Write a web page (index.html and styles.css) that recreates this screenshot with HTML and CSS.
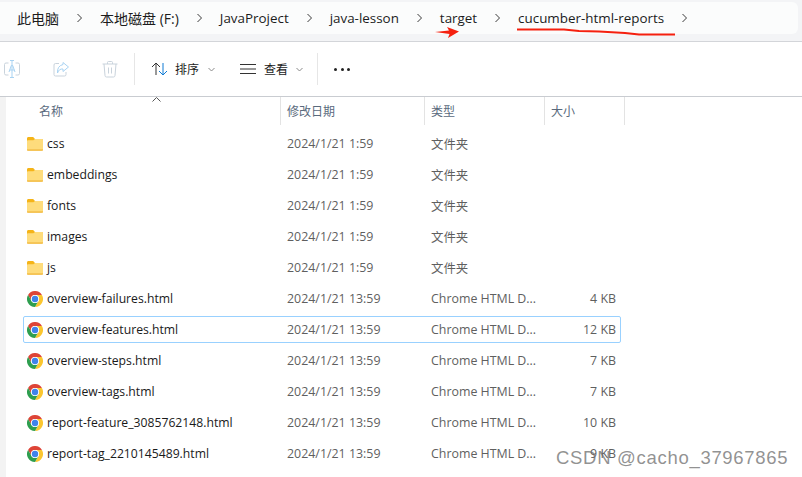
FILE: index.html
```html
<!DOCTYPE html>
<html lang="zh-CN">
<head>
    <meta charset="UTF-8">
    <meta name="viewport" content="width=device-width, initial-scale=1.0">
    <title>cucumber-html-reports</title>
    <link rel="stylesheet" href="styles.css">
</head>
<body>
    <svg class="sprites" width="0" height="0">
        <symbol id="folder" viewBox="0 0 16 16">
            <path d="M0 2.500C0 1.700.6 1 1.400 1h4.200c.4 0 .7.2 1 .4L8 3h6.600c.8 0 1.400.6 1.400 1.400V13c0 .9-.7 1.600-1.600 1.600H1.600C.7 14.600 0 13.900 0 13z" fill="#f5b418"/>
            <path d="M0 5.200c0-.6.5-1 1-1h5.400L8 3h6.600c.8 0 1.400.6 1.400 1.400V13c0 .9-.7 1.400-1.600 1.400H1.600C.7 14.400 0 13.900 0 13z" fill="#fedc7c"/>
            <rect y="13.600" width="16" height="1" rx=".5" fill="#eeb033"/>
        </symbol>
        <symbol id="chrome" viewBox="0 0 16 16">
            <path d="M1.070 4A8 8 0 0 1 14.930 4H8A4 4 0 0 0 4.540 10Z" fill="#de4437"/>
            <path d="M14.930 4A8 8 0 0 1 8 16L11.460 10A4 4 0 0 0 8 4Z" fill="#fbc62f"/>
            <path d="M8 16A8 8 0 0 1 1.070 4L4.540 10A4 4 0 0 0 11.460 10Z" fill="#2e9e4f"/>
            <circle cx="8" cy="8" r="4" fill="#fff"/>
            <circle cx="8" cy="8" r="3.200" fill="#3f83ea"/>
        </symbol>
        <symbol id="chevron" viewBox="0 0 7 10">
            <path d="M1.500 1 5.500 5 1.500 9"/>
        </symbol>
    </svg>

    <div class="addressbar">
        <div class="crumbs">
            <span class="crumb cn">此电脑</span>
            <svg class="sep"><use href="#chevron"/></svg>
            <span class="crumb cn">本地磁盘 (F:)</span>
            <svg class="sep"><use href="#chevron"/></svg>
            <span class="crumb">JavaProject</span>
            <svg class="sep"><use href="#chevron"/></svg>
            <span class="crumb">java-lesson</span>
            <svg class="sep"><use href="#chevron"/></svg>
            <span class="crumb">target
                <svg class="mark-arrow" width="25" height="12" viewBox="0 0 25 12"><path d="M0 5 14 3.500 12 0 24 4.500 13 11 14.500 7z"/></svg>
            </span>
            <svg class="sep"><use href="#chevron"/></svg>
            <span class="crumb">cucumber-html-reports
                <svg class="mark-line" width="160" height="9" viewBox="0 0 160 9"><path d="M0 1.500 47 1.500 62 3 82 3.500 108 5 122 6.500 158 6.500"/></svg>
            </span>
            <svg class="sep"><use href="#chevron"/></svg>
        </div>
    </div>

    <div class="toolbar">
        <div class="tool-group">
            <svg class="tool-icon" width="16" height="18" viewBox="0 0 16 18"><path d="M4.500 3H2Q.5 3 .5 4.500v9Q.5 15 2 15h2.500M11.500 3H14q1.500 0 1.500 1.500v9Q15.500 15 14 15h-2.500"/><path class="accent" d="M8 1v16M6 .5h4M6 17.500h4M5 12 7.300 5.500h1.400L11 12M5.800 10h4.400"/></svg>
            <svg class="tool-icon" width="16" height="18" viewBox="0 0 16 18"><path d="M6 3.500H2.500Q1 3.500 1 5v9.500Q1 16 2.500 16h9q1.500 0 1.500-1.500V12"/><path class="accent" d="M10 2.500l5.500 4.500-5.500 4.500V9Q6 8.500 4.500 13q-.5-7 5.500-8.500z"/></svg>
            <svg class="tool-icon" width="16" height="18" viewBox="0 0 16 18"><path d="M.5 4h15M5.500 4V2.500Q5.500 1.500 6.500 1.500h3q1 0 1 1V4M2 4l1 11.500Q3.100 17 4.500 17h7q1.400 0 1.500-1.500L14 4M6.500 7.500v6M9.500 7.500v6"/></svg>
        </div>
        <div class="tool-divider"></div>
        <div class="tool-button sort">
            <svg width="17" height="14" viewBox="0 0 17 14"><path class="up" d="M5 13V1M1 5l4-4 4 4"/><path class="down" d="M12 1v12M8 9l4 4 4-4"/></svg>
            <span>排序</span>
            <svg class="caret" width="7" height="5" viewBox="0 0 7 5"><path d="M.5 1 3.500 4 6.500 1"/></svg>
        </div>
        <div class="tool-button view">
            <svg width="16" height="10" viewBox="0 0 16 10"><path d="M0 .5h16M0 5h16M0 9.500h16"/></svg>
            <span>查看</span>
            <svg class="caret" width="7" height="5" viewBox="0 0 7 5"><path d="M.5 1 3.500 4 6.500 1"/></svg>
        </div>
        <div class="tool-divider"></div>
        <div class="more"><i></i><i></i><i></i></div>
    </div>

    <div class="content">
        <div class="file-list">
            <div class="list-head">
                <div class="col-name">名称
                    <svg class="sort-arrow" width="9" height="5" viewBox="0 0 9 5"><path d="M.5 4.500 4.500 .5 8.500 4.500"/></svg>
                </div>
                <div class="col-date">修改日期</div>
                <div class="col-type">类型</div>
                <div class="col-size">大小</div>
            </div>

            <div class="rows">
                <div class="row"><div class="col-name"><svg class="file-icon"><use href="#folder"/></svg>css</div><div class="col-date">2024/1/21 1:59</div><div class="col-type">文件夹</div><div class="col-size"></div></div>
                <div class="row"><div class="col-name"><svg class="file-icon"><use href="#folder"/></svg>embeddings</div><div class="col-date">2024/1/21 1:59</div><div class="col-type">文件夹</div><div class="col-size"></div></div>
                <div class="row"><div class="col-name"><svg class="file-icon"><use href="#folder"/></svg>fonts</div><div class="col-date">2024/1/21 1:59</div><div class="col-type">文件夹</div><div class="col-size"></div></div>
                <div class="row"><div class="col-name"><svg class="file-icon"><use href="#folder"/></svg>images</div><div class="col-date">2024/1/21 1:59</div><div class="col-type">文件夹</div><div class="col-size"></div></div>
                <div class="row"><div class="col-name"><svg class="file-icon"><use href="#folder"/></svg>js</div><div class="col-date">2024/1/21 1:59</div><div class="col-type">文件夹</div><div class="col-size"></div></div>
                <div class="row"><div class="col-name"><svg class="file-icon"><use href="#chrome"/></svg>overview-failures.html</div><div class="col-date">2024/1/21 13:59</div><div class="col-type">Chrome HTML D...</div><div class="col-size">4 KB</div></div>
                <div class="row selected"><div class="col-name"><svg class="file-icon"><use href="#chrome"/></svg>overview-features.html</div><div class="col-date">2024/1/21 13:59</div><div class="col-type">Chrome HTML D...</div><div class="col-size">12 KB</div></div>
                <div class="row"><div class="col-name"><svg class="file-icon"><use href="#chrome"/></svg>overview-steps.html</div><div class="col-date">2024/1/21 13:59</div><div class="col-type">Chrome HTML D...</div><div class="col-size">7 KB</div></div>
                <div class="row"><div class="col-name"><svg class="file-icon"><use href="#chrome"/></svg>overview-tags.html</div><div class="col-date">2024/1/21 13:59</div><div class="col-type">Chrome HTML D...</div><div class="col-size">7 KB</div></div>
                <div class="row"><div class="col-name"><svg class="file-icon"><use href="#chrome"/></svg>report-feature_3085762148.html</div><div class="col-date">2024/1/21 13:59</div><div class="col-type">Chrome HTML D...</div><div class="col-size">10 KB</div></div>
                <div class="row"><div class="col-name"><svg class="file-icon"><use href="#chrome"/></svg>report-tag_2210145489.html</div><div class="col-date">2024/1/21 13:59</div><div class="col-type">Chrome HTML D...</div><div class="col-size">9 KB</div></div>
            </div>
        </div>
    </div>

    <div class="watermark">CSDN @cacho_37967865</div>
</body>
</html>
```

FILE: styles.css
```css
* {
    box-sizing: border-box;
}
html, body {
    height: 100%;
}
body {
    margin: 0;
    font-family: "Open Sans", "Noto Sans CJK SC", sans-serif;
    font-size: 12.2px;
    color: #1c1c1c;
    background-color: #ffffff;
    overflow: hidden;
    position: relative;
}
.sprites {
    position: absolute;
}

/* address bar */
.addressbar {
    height: 42px;
    padding: 2px 4px 0 0;
    background-color: #f3f4f6;
    border-bottom: 1px solid #d3d5d9;
}
.crumbs {
    height: 32px;
    display: flex;
    align-items: center;
    padding-left: 17px;
    background-color: #fbfcfc;
    border-radius: 0 6px 6px 0;
}
.crumb {
    position: relative;
    white-space: nowrap;
    font-size: 13.4px;
}
.crumb.cn {
    font-size: 14px;
}
.sep {
    width: 7px;
    height: 10px;
    margin: 0 17px;
    flex: none;
    fill: none;
    stroke: #3a3a3a;
    stroke-width: 1;
}
.mark-arrow {
    position: absolute;
    left: -5px;
    top: 18px;
    fill: #f5200f;
}
.mark-line {
    position: absolute;
    left: -1px;
    top: 19px;
    fill: none;
    stroke: #f5200f;
    stroke-width: 2;
}

/* toolbar */
.toolbar {
    height: 55px;
    display: flex;
    align-items: center;
    padding-left: 4px;
    border-bottom: 1px solid #c9ccd1;
}
.tool-group {
    display: flex;
    gap: 33px;
    width: 130px;
}
.tool-icon {
    fill: none;
    stroke: #c9d3dc;
    stroke-width: 1;
}
.tool-icon .accent {
    stroke: #a9d3f2;
}
.tool-divider {
    width: 1px;
    height: 32px;
    background-color: #e6e6e6;
}
.tool-button {
    display: flex;
    align-items: center;
    font-size: 12px;
    white-space: nowrap;
}
.tool-button svg {
    flex: none;
    fill: none;
    stroke: #333333;
    stroke-width: 1;
}
.tool-button .down {
    stroke: #0f7bd4;
}
.tool-button .caret {
    stroke: #8a8a8a;
}
.sort {
    width: 80px;
    padding-left: 16px;
    gap: 7px;
}
.sort .caret {
    margin-left: 2px;
}
.view {
    width: 102px;
    padding-left: 25px;
    gap: 8px;
}
.more {
    display: flex;
    gap: 3.5px;
    margin-left: 16px;
}
.more i {
    width: 3px;
    height: 3px;
    border-radius: 50%;
    background-color: #222222;
}

/* file list */
.content {
    padding-left: 6px;
    background-color: #f3f3f3;
    height: calc(100% - 97px);
}
.file-list {
    background-color: #ffffff;
    height: 100%;
    overflow: hidden;
}
.list-head {
    height: 28px;
    display: flex;
    color: #5a6a7d;
    font-size: 12px;
}
.list-head > div {
    display: flex;
    align-items: center;
    border-right: 1px solid #e3e3e3;
    position: relative;
}
.list-head .col-name {
    width: 275px;
    padding-left: 33px;
}
.sort-arrow {
    position: absolute;
    left: 146px;
    top: 0;
    fill: none;
    stroke: #555555;
}
.col-name {
    flex: none;
    display: flex;
    align-items: center;
}
.col-date {
    width: 144px;
    flex: none;
    padding-left: 6px;
}
.col-type {
    width: 120px;
    flex: none;
    padding-left: 6px;
}
.col-size {
    width: 80px;
    flex: none;
    padding-left: 6px;
}
.rows {
    display: flex;
    flex-direction: column;
    gap: 4px;
    padding: 5px 0 0 17px;
}
.row {
    height: 27px;
    width: 598px;
    flex: none;
    display: flex;
    align-items: center;
    border: 1px solid transparent;
    color: #1a1a1a;
}
.row .col-name {
    width: 258px;
    padding-left: 3px;
}
.row .col-date,
.row .col-type {
    padding-left: 5px;
    color: #5f5f5f;
    font-size: 12.4px;
}
.row .col-size {
    width: 70px;
    padding-left: 0;
    text-align: right;
    color: #5f5f5f;
    font-size: 12.4px;
}
.row.selected {
    border-color: #99d1ff;
    border-radius: 2px;
}
.file-icon {
    width: 16px;
    height: 16px;
    margin-right: 4px;
    flex: none;
}
.watermark {
    position: absolute;
    left: 556px;
    top: 447px;
    font-family: "Liberation Sans", Arial, sans-serif;
    font-size: 18.5px;
    letter-spacing: .7px;
    color: rgba(110, 110, 110, .75);
    white-space: nowrap;
}
```
